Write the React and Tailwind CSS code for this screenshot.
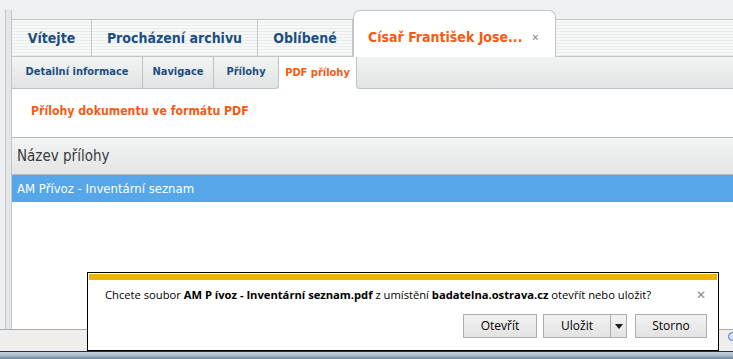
import React from "react";

const stripe =
  "bg-[repeating-linear-gradient(to_bottom,#f7f8f8_0px,#f7f8f8_2px,#eaecec_2px,#eaecec_3px)]";

const topTabs = [
  { label: "Vítejte", w: "w-[80px]" },
  { label: "Procházení archivu", w: "w-[166px]" },
  { label: "Oblíbené", w: "w-[95px]" },
];

const subTabs = [
  { label: "Detailní informace", w: "w-[131px]" },
  { label: "Navigace", w: "w-[71px]" },
  { label: "Přílohy", w: "w-[65px]", last: true },
];

export default function App() {
  return (
    <div className="relative w-[733px] h-[359px] overflow-hidden bg-[#eff0f1] font-['DejaVu_Sans_Condensed','DejaVu_Sans',sans-serif]">
      {/* PAGE */}
      <div className="flex h-[329px] pt-[10px] pl-[5px]">
        {/* left rail */}
        <div className="w-[7px] bg-[#e4e7e7] border-x border-[#c3c7c7]"></div>

        <div className="flex-1 flex flex-col min-w-0">
          {/* main tabs */}
          <div className="flex items-end h-[47px]">
            {topTabs.map((t) => (
              <div
                key={t.label}
                className={`${t.w} h-[38px] ${stripe} border-t border-r border-b border-[#c2c6c6] flex items-center justify-center text-[14px] font-bold text-[#1c4f80]`}
              >
                {t.label}
              </div>
            ))}
            <div className="w-[203px] h-[47px] bg-white border border-b-0 border-[#c2c6c6] rounded-t-[7px] flex items-center pl-[14px] pt-[6px] text-[14px] font-bold text-[#f75a12]">
              Císař František Jose...
              <span className="ml-[9px] text-[10px] text-[#7d8a94]">✕</span>
            </div>
            <div className={`flex-1 h-[38px] ${stripe} border-t border-b border-[#c2c6c6]`}></div>
          </div>

          {/* sub tabs */}
          <div className="flex h-[32px]">
            {subTabs.map((t) => (
              <div
                key={t.label}
                className={`${t.w} h-full bg-linear-to-b from-[#f2f4f4] to-[#e1e4e4] border-r border-b border-[#bfc3c3] flex items-center justify-center text-[11px] font-bold text-[#1c4f80] ${t.last ? "rounded-br-[4px]" : ""}`}
              >
                {t.label}
              </div>
            ))}
            <div className="w-[77px] h-full bg-white flex items-center justify-center text-[11px] font-bold text-[#f75a12]">
              PDF přílohy
            </div>
            <div className="flex-1 h-full bg-linear-to-b from-[#f2f4f4] to-[#e1e4e4] border-l border-b border-[#bfc3c3] rounded-bl-[4px]"></div>
          </div>

          {/* content */}
          <div className="flex-1 bg-white flex flex-col">
            <div className="h-[48px] pl-[19px] pt-[13px] text-[12.2px] font-bold text-[#f75a12]">
              Přílohy dokumentu ve formátu PDF
            </div>
            <div className="h-[38px] border-y border-[#b8bbbb] bg-linear-to-b from-[#f2f3f3] to-[#e4e5e6] flex items-center pl-[5px] text-[15px] text-[#3a3a3a]">
              Název přílohy
            </div>
            <div className="h-[27px] bg-[#56a6ea] flex items-center pl-[5px] text-[13px] text-white">
              AM Přívoz - Inventární seznam
            </div>
          </div>
        </div>
      </div>

      {/* STATUS AREA */}
      <div className="h-[22px] border-t border-[#a8a8a8] bg-[#f0eded]"></div>
      <div className="h-[8px] border-t border-[#2a2f36] bg-linear-to-b from-[#c7d6e3] via-[#a9bccc] to-[#6d8296]"></div>
      <div className="absolute right-[-4px] top-[332px] w-[9px] h-[9px] rounded-full border border-[#3b7ac4] bg-[#cfe2f6]"></div>

      {/* DOWNLOAD BAR */}
      <div className="absolute left-[87px] top-[272px] w-[632px] h-[79px] border border-black bg-white p-px flex flex-col font-['Open_Sans','Noto_Sans',sans-serif] text-black">
        <div className="h-[6px] bg-[#f0b400]"></div>
        <div className="relative flex items-center h-[25px] mt-[3px] pl-[16px] text-[11.2px] whitespace-nowrap">
          <span>
            Chcete soubor <b className="font-bold">AM P ívoz - Inventární seznam.pdf</b> z umístění{" "}
            <b className="font-bold">badatelna.ostrava.cz</b> otevřít nebo uložit?
          </span>
          <span className="absolute right-[11px] top-[3px] text-[12px] text-[#8c8c8c]">✕</span>
        </div>
        <div className="flex justify-end pr-[10px] pt-[6px] text-[12px]">
          <div className="w-[74px] h-[24px] border border-[#adadad] bg-linear-to-b from-[#f2f2f2] to-[#e3e3e3] flex items-center justify-center">
            Otevřít
          </div>
          <div className="ml-[6px] w-[84px] h-[24px] border border-[#adadad] bg-linear-to-b from-[#f2f2f2] to-[#e3e3e3] flex">
            <div className="w-[67px] border-r border-[#adadad] flex items-center justify-center">Uložit</div>
            <div className="flex-1 flex items-center justify-center">
              <svg width="8" height="5" viewBox="0 0 8 5">
                <path d="M0 0h8L4 5z" fill="#1a1a1a" />
              </svg>
            </div>
          </div>
          <div className="ml-[8px] w-[72px] h-[24px] border border-[#adadad] bg-linear-to-b from-[#f2f2f2] to-[#e3e3e3] flex items-center justify-center">
            Storno
          </div>
        </div>
      </div>
    </div>
  );
}
